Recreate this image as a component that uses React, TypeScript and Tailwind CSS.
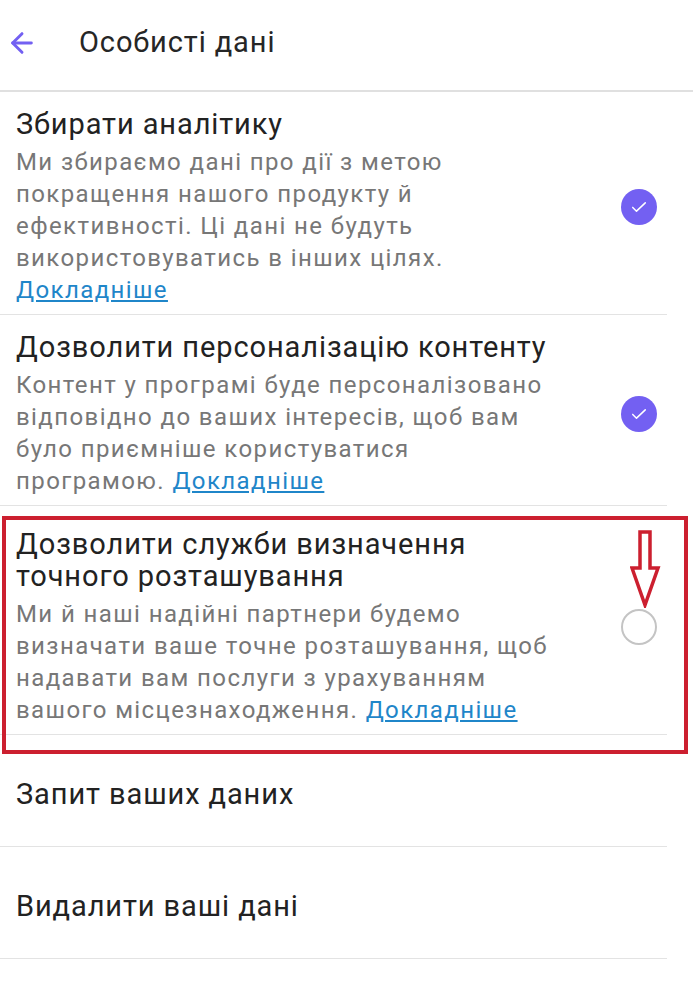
import { ArrowLeft } from "lucide-react";

const font = { fontFamily: "Roboto, 'Noto Sans', sans-serif" };

type Item = {
  title: string[];
  desc: string[];
  link: "own" | "inline";
  checked: boolean;
};

const items: Item[] = [
  {
    title: ["Збирати аналітику"],
    desc: [
      "Ми збираємо дані про дії з метою",
      "покращення нашого продукту й",
      "ефективності. Ці дані не будуть",
      "використовуватись в інших цілях.",
    ],
    link: "own",
    checked: true,
  },
  {
    title: ["Дозволити персоналізацію контенту"],
    desc: [
      "Контент у програмі буде персоналізовано",
      "відповідно до ваших інтересів, щоб вам",
      "було приємніше користуватися",
      "програмою.",
    ],
    link: "inline",
    checked: true,
  },
];

function Check({ on }: { on: boolean }) {
  if (on) {
    return (
      <div className="w-9 h-9 rounded-full bg-[#7360f2] flex items-center justify-center">
        <svg width="20" height="20" viewBox="0 0 24 24" fill="none" stroke="white" strokeWidth="1.8" strokeLinecap="round" strokeLinejoin="round">
          <path d="M4.5 12.5l4.5 4.5L19.5 7" />
        </svg>
      </div>
    );
  }
  return <div className="w-9 h-9 rounded-full border-2 border-[#c4c4c4]" />;
}

function More() {
  return <span className="text-[#1f86c9] underline underline-offset-2">Докладніше</span>;
}

function ToggleRow({ item, extraTop }: { item: Item; extraTop?: boolean }) {
  return (
    <div className={`flex items-center border-b border-[#e3e3e3] mr-[26px] ${extraTop ? "pt-[22px]" : "pt-4"} pb-2`}>
      <div className="flex-1 pl-4">
        <div className="text-[29px] leading-[32px] text-[#222] tracking-[0.9px]">
          {item.title.map((t) => (
            <div key={t}>{t}</div>
          ))}
        </div>
        <div className="mt-[6px] text-[24px] leading-[32px] text-[#777] tracking-[1.4px]">
          {item.desc.map((d, i) => (
            <div key={d}>
              {d}
              {item.link === "inline" && i === item.desc.length - 1 && (
                <>
                  {" "}
                  <More />
                </>
              )}
            </div>
          ))}
          {item.link === "own" && (
            <div>
              <More />
            </div>
          )}
        </div>
      </div>
      <div className="w-[74px] flex justify-center pl-[18px]">
        <Check on={item.checked} />
      </div>
    </div>
  );
}

export default function App() {
  return (
    <div className="w-[693px] h-[997px] bg-white overflow-hidden" style={font}>
      <header className="h-[92px] flex items-center border-b-2 border-[#e0e0e0] pb-1">
        <ArrowLeft className="ml-[6px] w-[32px] h-[32px] text-[#7360f2]" strokeWidth={2.2} />
        <h1 className="ml-[41px] text-[29px] text-[#262626] tracking-[0.9px]">Особисті дані</h1>
      </header>

      {items.map((item) => (
        <ToggleRow key={item.title[0]} item={item} />
      ))}

      {/* location row, marked with a red frame and arrow */}
      <div className="relative">
        <ToggleRow
          extraTop
          item={{
            title: ["Дозволити служби визначення", "точного розташування"],
            desc: [
              "Ми й наші надійні партнери будемо",
              "визначати ваше точне розташування, щоб",
              "надавати вам послуги з урахуванням",
              "вашого місцезнаходження.",
            ],
            link: "inline",
            checked: false,
          }}
        />
        <div className="absolute left-[2px] right-[5px] top-[10px] -bottom-[19px] border-4 border-[#cc1f2f] pointer-events-none" />
        <svg className="absolute left-[630px] top-[24px]" width="32" height="78" viewBox="0 0 32 78" fill="none">
          <path d="M10 2H20V38H28L15 75L2 38H10Z" stroke="#cc1f2f" strokeWidth="3.5" strokeLinejoin="miter" fill="white" />
        </svg>
      </div>

      <div className="h-[112px] flex items-center pl-4 pt-2 mr-[26px] border-b border-[#e3e3e3] text-[29px] text-[#222] tracking-[0.9px]">
        Запит ваших даних
      </div>
      <div className="h-[112px] flex items-center pl-4 pt-2 mr-[26px] border-b border-[#e3e3e3] text-[29px] text-[#222] tracking-[0.9px]">
        Видалити ваші дані
      </div>
    </div>
  );
}
